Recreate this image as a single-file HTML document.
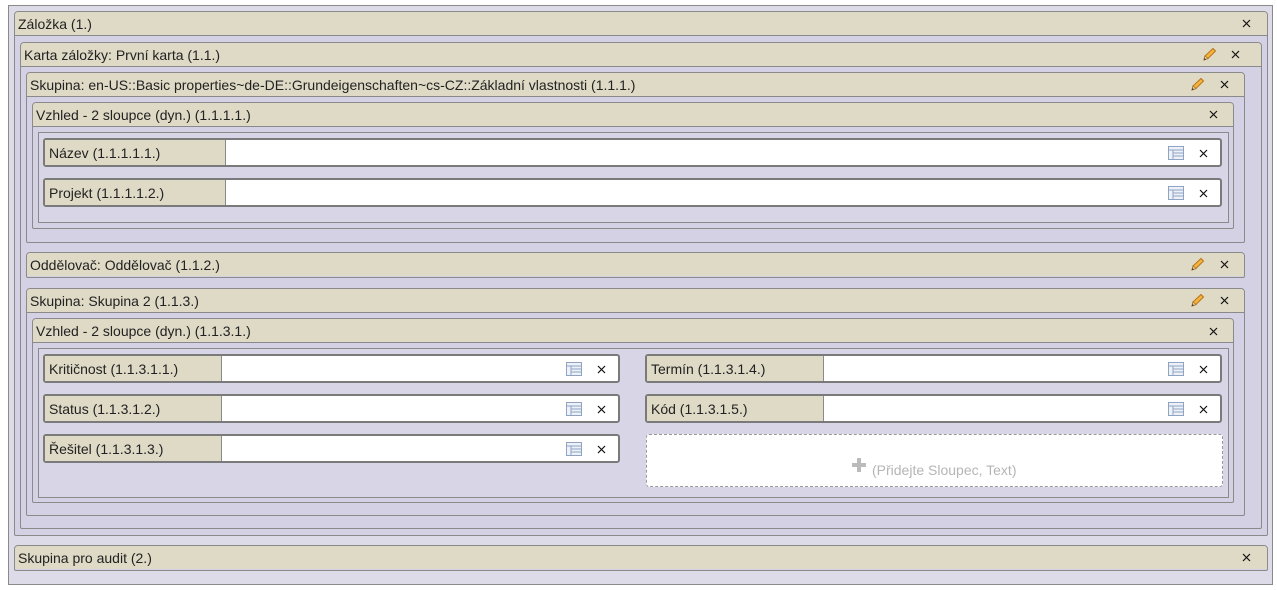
<!DOCTYPE html>
<html><head><meta charset="utf-8"><style>
body{margin:0;width:1277px;height:591px;background:#fff;position:relative;overflow:hidden;font-family:"Liberation Sans",Arial,sans-serif;font-size:14px;color:#222}
.a{position:absolute;box-sizing:border-box}
.p{border:1px solid #8a8a8a;border-radius:4px 4px 2px 2px;background:#d3d1e3}
.h{position:absolute;left:0;right:0;top:0;height:23px;background:#dfdac6;border-bottom:1px solid #8a8a8a;border-radius:3px 3px 0 0;padding-left:3px;line-height:24px;white-space:nowrap}
.x{position:absolute;width:9px;height:9px}
.f{border:2px solid #7a7a7a;border-radius:3px;background:#fff;height:29px}
.l{position:absolute;left:0;top:0;bottom:0;background:#dfdac6;border-right:1px solid #8a8a8a;padding-left:4px;line-height:26px}
</style></head><body>
<svg width="0" height="0" style="position:absolute"><defs>
<symbol id="x" viewBox="0 0 9 9"><path d="M1 1L8 8M8 1L1 8" stroke="#111" stroke-width="1.2"/></symbol>
<symbol id="pen" viewBox="0 0 16 16"><path d="M3 13L4 9L12 1.5L14.5 4L7 11.5Z" fill="#f4b43c" stroke="#b9741a" stroke-width="1"/><path d="M3 13L4 9L7 11.5Z" fill="#f5deb0" stroke="#a0702a" stroke-width=".8"/><path d="M3 13L3.6 11L5 12.4Z" fill="#333"/></symbol>
<symbol id="tb" viewBox="0 0 16 14"><rect x=".5" y=".5" width="15" height="13" fill="#eef2f8" stroke="#8fa3c3"/><path d="M1 4H15M5 4V13M5 7H15M5 10H15" stroke="#8fa3c3"/></symbol>
</defs></svg>

<div class="a" style="left:8px;top:5px;width:1265px;height:580px;border:1px solid #8a8a8a;background:#dddbe8"></div>

<div class="a p" style="left:14px;top:11px;width:1254px;height:525px"><div class="h">Záložka (1.)</div></div>
<svg class="x" style="left:1242px;top:19px"><use href="#x"/></svg>

<div class="a p" style="left:20px;top:42px;width:1242px;height:487px"><div class="h">Karta záložky: První karta (1.1.)</div></div>
<svg class="a" width="16" height="16" style="left:1201px;top:47px"><use href="#pen"/></svg>
<svg class="x" style="left:1231px;top:50px"><use href="#x"/></svg>

<div class="a p" style="left:26px;top:72px;width:1219px;height:171px"><div class="h">Skupina: en-US::Basic properties~de-DE::Grundeigenschaften~cs-CZ::Základní vlastnosti (1.1.1.)</div></div>
<svg class="a" width="16" height="16" style="left:1189px;top:77px"><use href="#pen"/></svg>
<svg class="x" style="left:1220px;top:80px"><use href="#x"/></svg>

<div class="a p" style="left:32px;top:102px;width:1202px;height:127px"><div class="h">Vzhled - 2 sloupce (dyn.) (1.1.1.1.)</div></div>
<svg class="x" style="left:1209px;top:110px"><use href="#x"/></svg>
<div class="a" style="left:38px;top:132px;width:1191px;height:91px;border:1px solid #8a8a8a;background:#d8d6e6"></div>

<div class="a f" style="left:43px;top:138px;width:1179px"><div class="l" style="width:176px">Název (1.1.1.1.1.)</div></div>
<svg class="a" width="16" height="14" style="left:1168px;top:146px"><use href="#tb"/></svg>
<svg class="x" style="left:1199px;top:149px"><use href="#x"/></svg>
<div class="a f" style="left:43px;top:178px;width:1179px"><div class="l" style="width:176px">Projekt (1.1.1.1.2.)</div></div>
<svg class="a" width="16" height="14" style="left:1168px;top:186px"><use href="#tb"/></svg>
<svg class="x" style="left:1199px;top:189px"><use href="#x"/></svg>

<div class="a p" style="left:26px;top:252px;width:1219px;height:26px"><div class="h" style="border-bottom:none">Oddělovač: Oddělovač (1.1.2.)</div></div>
<svg class="a" width="16" height="16" style="left:1189px;top:257px"><use href="#pen"/></svg>
<svg class="x" style="left:1220px;top:260px"><use href="#x"/></svg>

<div class="a p" style="left:26px;top:288px;width:1219px;height:228px"><div class="h">Skupina: Skupina 2 (1.1.3.)</div></div>
<svg class="a" width="16" height="16" style="left:1189px;top:293px"><use href="#pen"/></svg>
<svg class="x" style="left:1220px;top:296px"><use href="#x"/></svg>

<div class="a p" style="left:32px;top:318px;width:1202px;height:185px"><div class="h">Vzhled - 2 sloupce (dyn.) (1.1.3.1.)</div></div>
<svg class="x" style="left:1209px;top:327px"><use href="#x"/></svg>
<div class="a" style="left:38px;top:348px;width:1191px;height:150px;border:1px solid #8a8a8a;background:#d8d6e6"></div>

<div class="a f" style="left:43px;top:354px;width:577px"><div class="l" style="width:172px">Kritičnost (1.1.3.1.1.)</div></div>
<svg class="a" width="16" height="14" style="left:566px;top:362px"><use href="#tb"/></svg>
<svg class="x" style="left:597px;top:365px"><use href="#x"/></svg>
<div class="a f" style="left:43px;top:394px;width:577px"><div class="l" style="width:172px">Status (1.1.3.1.2.)</div></div>
<svg class="a" width="16" height="14" style="left:566px;top:402px"><use href="#tb"/></svg>
<svg class="x" style="left:597px;top:405px"><use href="#x"/></svg>
<div class="a f" style="left:43px;top:434px;width:577px"><div class="l" style="width:172px">Řešitel (1.1.3.1.3.)</div></div>
<svg class="a" width="16" height="14" style="left:566px;top:442px"><use href="#tb"/></svg>
<svg class="x" style="left:597px;top:445px"><use href="#x"/></svg>

<div class="a f" style="left:645px;top:354px;width:577px"><div class="l" style="width:172px">Termín (1.1.3.1.4.)</div></div>
<svg class="a" width="16" height="14" style="left:1168px;top:362px"><use href="#tb"/></svg>
<svg class="x" style="left:1199px;top:365px"><use href="#x"/></svg>
<div class="a f" style="left:645px;top:394px;width:577px"><div class="l" style="width:172px">Kód (1.1.3.1.5.)</div></div>
<svg class="a" width="16" height="14" style="left:1168px;top:402px"><use href="#tb"/></svg>
<svg class="x" style="left:1199px;top:405px"><use href="#x"/></svg>

<div class="a" style="left:646px;top:434px;width:577px;height:53px;border:1px dashed #999;border-radius:3px;background:#fff"></div>
<svg class="a" width="16" height="16" style="left:851px;top:457px"><path d="M8 1V15M1 8H15" stroke="#bbb" stroke-width="4"/></svg>
<div class="a" style="left:872px;top:462px;color:#b5b5b5;font-size:14px">(Přidejte Sloupec, Text)</div>

<div class="a p" style="left:14px;top:545px;width:1254px;height:26px"><div class="h" style="border-bottom:none">Skupina pro audit (2.)</div></div>
<svg class="x" style="left:1242px;top:553px"><use href="#x"/></svg>
</body></html>
